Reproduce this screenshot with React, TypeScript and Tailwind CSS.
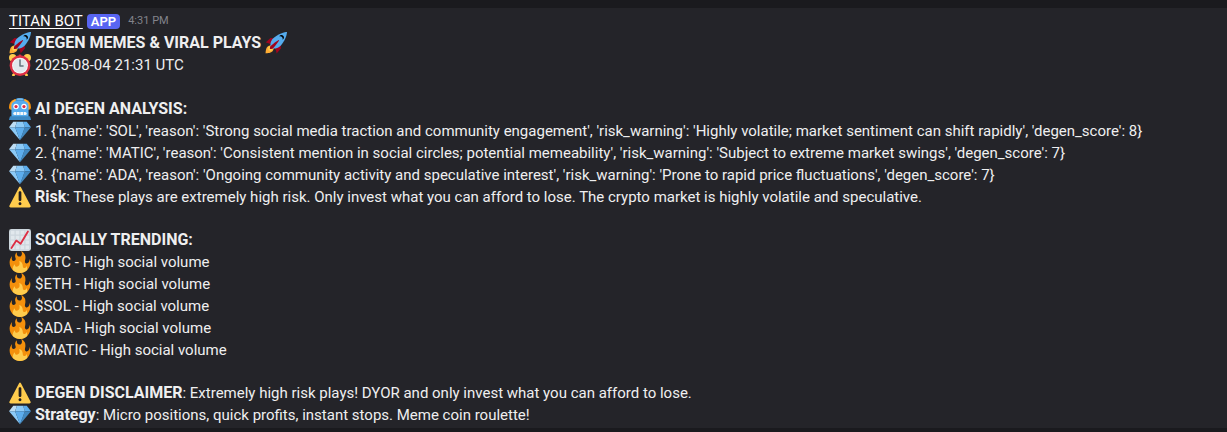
import type { ReactNode } from "react";

type EmojiName = "rocket" | "alarm" | "robot" | "gem" | "warning" | "chart" | "fire";

const EMOJI: Record<EmojiName, ReactNode> = {
  rocket: (
    <>
      <path fill="#A0041E" d="M1 17l8-7 16 1 1 16-7 8s.001-5.999-6-12-12-6-12-6z" />
      <path fill="#FFAC33" d="M.973 35s-.036-7.979 2.985-11S15 21.187 15 21.187 14.999 29 11.999 32c-3 3-11.026 3-11.026 3z" />
      <circle fill="#FFCC4D" cx="9" cy="27" r="4" />
      <path fill="#55ACEE" d="M35.999 0s-10 0-22 10c-6 5-6 14-4 16s10 2 16-4c10-12 10-22 10-22z" />
      <path fill="#000" d="M26.999 5c-1.623 0-3.013.971-3.641 2.36.502-.227 1.055-.36 1.641-.36 2.209 0 4 1.791 4 4 0 .586-.133 1.139-.359 1.64 1.389-.627 2.359-2.017 2.359-3.64 0-2.209-1.791-4-4-4z" />
      <path fill="#A0041E" d="M8 28s0-4 1-5 13.001-10.999 14-10-9.001 13-10.001 14S8 28 8 28z" />
    </>
  ),
  alarm: (
    <>
      <path fill="#FFCC4D" d="M7 31l4 2-2 3H6c-1 0-1.500-1-1-2zM29 31l-4 2 2 3h3c1 0 1.500-1 1-2z" />
      <path fill="#DD2E44" d="M16 1h4v5h-4z" />
      <circle fill="#FFCC4D" cx="6" cy="6" r="6" />
      <circle fill="#FFCC4D" cx="30" cy="6" r="6" />
      <circle fill="#DD2E44" cx="18" cy="19" r="17" />
      <circle fill="#F5F8FA" cx="18" cy="19" r="13" />
      <circle fill="#E1E8ED" cx="18" cy="19" r="11.500" />
      <path fill="none" stroke="#66757F" strokeWidth="2.500" strokeLinecap="round" strokeLinejoin="round" d="M18 10v9.500h5" />
    </>
  ),
  robot: (
    <>
      <path fill="#F4900C" d="M0 15C0 9 3 4 9 2h18c6 2 9 7 9 13 0 2-1 4-3 4H3c-2 0-3-2-3-4z" />
      <path fill="#FFAC33" d="M3 10C5 4 9 2 13 2h10c4 0 8 2 10 8v9H3z" />
      <path fill="#3B88C3" d="M11 3c0-2 2-3 4-3h6c2 0 4 1 4 3v5H11z" />
      <path fill="#55ACEE" d="M4 34V13C4 7 9 4 18 4s14 3 14 9v21z" />
      <path fill="#8CCAF7" d="M12 3c1-1.500 3-2 6-2s5 .5 6 2z" />
      <path fill="#3B88C3" d="M1 32c0-1.500 1-2 2-2h30c1 0 2 .5 2 2l1 3c0 .7-.3 1-1 1H1c-.7 0-1-.3-1-1z" />
      <circle fill="#fff" cx="11.500" cy="14" r="4.500" />
      <circle fill="#fff" cx="24.500" cy="14" r="4.500" />
      <circle fill="#DD2E44" cx="11.500" cy="14" r="2.600" />
      <circle fill="#DD2E44" cx="24.500" cy="14" r="2.600" />
      <rect fill="#F5F8FA" x="7" y="23" width="22" height="5" rx="2.500" />
      <path fill="#55ACEE" d="M12 23h1v5h-1zM17.500 23h1v5h-1zM23 23h1v5h-1z" />
    </>
  ),
  gem: (
    <>
      <path fill="#BDDDF4" d="M13 3H7l-7 9h10z" />
      <path fill="#5DADEC" d="M36 12l-7-9h-6l3 9z" />
      <path fill="#4289C1" d="M26 12h10L18 33z" />
      <path fill="#8CCAF7" d="M10 12H0l18 21zM13 3l-3 9h16l-3-9z" />
      <path fill="#5DADEC" d="M18 33l-8-21h16z" />
    </>
  ),
  warning: (
    <>
      <path fill="#FFCC4D" d="M2.653 35C.811 35-.001 33.662.847 32.027L16.456 1.972c.849-1.635 2.238-1.635 3.087 0l15.609 30.056c.85 1.634.037 2.972-1.805 2.972H2.653z" />
      <path fill="#231F20" d="M15.583 28.953c0-1.333 1.085-2.418 2.419-2.418 1.333 0 2.418 1.085 2.418 2.418 0 1.334-1.086 2.419-2.418 2.419-1.334 0-2.419-1.085-2.419-2.419zm.186-18.293c0-1.302.961-2.108 2.232-2.108 1.241 0 2.233.837 2.233 2.108v11.938c0 1.271-.992 2.108-2.233 2.108-1.271 0-2.232-.807-2.232-2.108V10.660z" />
    </>
  ),
  chart: (
    <>
      <rect fill="#CCD6DD" width="36" height="36" rx="4" />
      <path fill="#E1E8ED" d="M3 3h6v6H3zM11 3h6v6h-6zM19 3h6v6h-6zM27 3h6v6h-6zM3 11h6v6H3zM11 11h6v6h-6zM19 11h6v6h-6zM27 11h6v6h-6zM3 19h6v6H3zM11 19h6v6h-6zM19 19h6v6h-6zM27 19h6v6h-6zM3 27h6v6H3zM11 27h6v6h-6zM19 27h6v6h-6zM27 27h6v6h-6z" />
      <path fill="none" stroke="#DD2E44" strokeWidth="3" strokeLinecap="round" strokeLinejoin="round" d="M4 31l8-12 7 5L31 4" />
    </>
  ),
  fire: (
    <>
      <path fill="#F4900C" d="M35 19c0-2.062-.367-4.039-1.040-5.868-.46 5.389-3.333 8.157-6.335 6.868-2.812-1.208-.917-5.917-.777-8.164.236-3.809-.012-8.169-6.931-11.794 2.875 5.500.333 8.917-2.333 9.125-2.958.231-5.667-2.542-4.667-7.042-3.238 2.386-3.332 6.402-2.333 9 1.042 2.708-.042 4.958-2.583 5.208-2.840.280-4.418-3.041-2.963-8.333C2.520 10.965 1 14.805 1 19c0 9.389 7.611 17 17 17s17-7.611 17-17z" />
      <path fill="#FFCC4D" d="M28.394 23.999c.148 3.084-2.561 4.293-4.019 3.709-2.106-.843-1.541-2.291-2.083-5.291s-2.625-5.083-5.708-6c2.250 6.333-1.247 8.667-3.080 9.084-1.872.426-3.753-.001-3.968-4.007C7.352 23.668 6 26.676 6 30c0 .368.023.730.055 1.090C9.125 34.124 13.342 36 18 36s8.875-1.876 11.945-4.910c.032-.360.055-.722.055-1.090 0-2.187-.584-4.236-1.606-6.001z" />
    </>
  ),
};

function Emoji({ name }: { name: EmojiName }) {
  return (
    <svg viewBox="0 0 36 36" className="size-[22px] shrink-0" role="img" aria-label={name}>
      {EMOJI[name]}
    </svg>
  );
}

function Line({ icon, children }: { icon: EmojiName; children: ReactNode }) {
  return (
    <div className="flex items-start gap-1">
      <Emoji name={icon} />
      {children}
    </div>
  );
}

function Title({ children }: { children: ReactNode }) {
  return <h2 className="text-[16px] font-bold">{children}</h2>;
}

function Label({ children }: { children: ReactNode }) {
  return <strong className="text-[16px] leading-none font-bold">{children}</strong>;
}

const PICKS = [
  "1. {'name': 'SOL', 'reason': 'Strong social media traction and community engagement', 'risk_warning': 'Highly volatile; market sentiment can shift rapidly', 'degen_score': 8}",
  "2. {'name': 'MATIC', 'reason': 'Consistent mention in social circles; potential memeability', 'risk_warning': 'Subject to extreme market swings', 'degen_score': 7}",
  "3. {'name': 'ADA', 'reason': 'Ongoing community activity and speculative interest', 'risk_warning': 'Prone to rapid price fluctuations', 'degen_score': 7}",
];

const TRENDING = ["$BTC", "$ETH", "$SOL", "$ADA", "$MATIC"];

export default function App() {
  return (
    <main className="border-t-8 border-b-4 border-[#1a1a1e] bg-[#242429] px-[9px] pt-[2px] pb-[2px] font-['Roboto',sans-serif] text-[15px] leading-[22px] text-[#efeff0]">
      <article>
        <header className="flex items-center">
          <a href="#titan-bot" className="text-white underline underline-offset-2">
            TITAN BOT
          </a>
          <span className="ml-1 rounded bg-[#5865f2] px-1 text-[13px] leading-[15px] font-semibold text-white">APP</span>
          <time className="ml-2 text-[11px] text-[#82838b]">4:31 PM</time>
        </header>
        <div className="flex flex-col gap-[21px]">
          <section className="pb-px">
            <Line icon="rocket">
              <Title>DEGEN MEMES &amp; VIRAL PLAYS</Title>
              <Emoji name="rocket" />
            </Line>
            <Line icon="alarm">
              <p>2025-08-04 21:31 UTC</p>
            </Line>
          </section>
          <section>
            <Line icon="robot">
              <Title>AI DEGEN ANALYSIS:</Title>
            </Line>
            {PICKS.map((pick) => (
              <Line key={pick} icon="gem">
                <p>{pick}</p>
              </Line>
            ))}
            <Line icon="warning">
              <p>
                <Label>Risk</Label>: These plays are extremely high risk. Only invest what you can afford to lose. The crypto market is highly volatile and speculative.
              </p>
            </Line>
          </section>
          <section>
            <Line icon="chart">
              <Title>SOCIALLY TRENDING:</Title>
            </Line>
            {TRENDING.map((coin) => (
              <Line key={coin} icon="fire">
                <p>{coin} - High social volume</p>
              </Line>
            ))}
          </section>
          <section>
            <Line icon="warning">
              <p>
                <Label>DEGEN DISCLAIMER</Label>: Extremely high risk plays! DYOR and only invest what you can afford to lose.
              </p>
            </Line>
            <Line icon="gem">
              <p>
                <Label>Strategy</Label>: Micro positions, quick profits, instant stops. Meme coin roulette!
              </p>
            </Line>
          </section>
        </div>
      </article>
    </main>
  );
}
